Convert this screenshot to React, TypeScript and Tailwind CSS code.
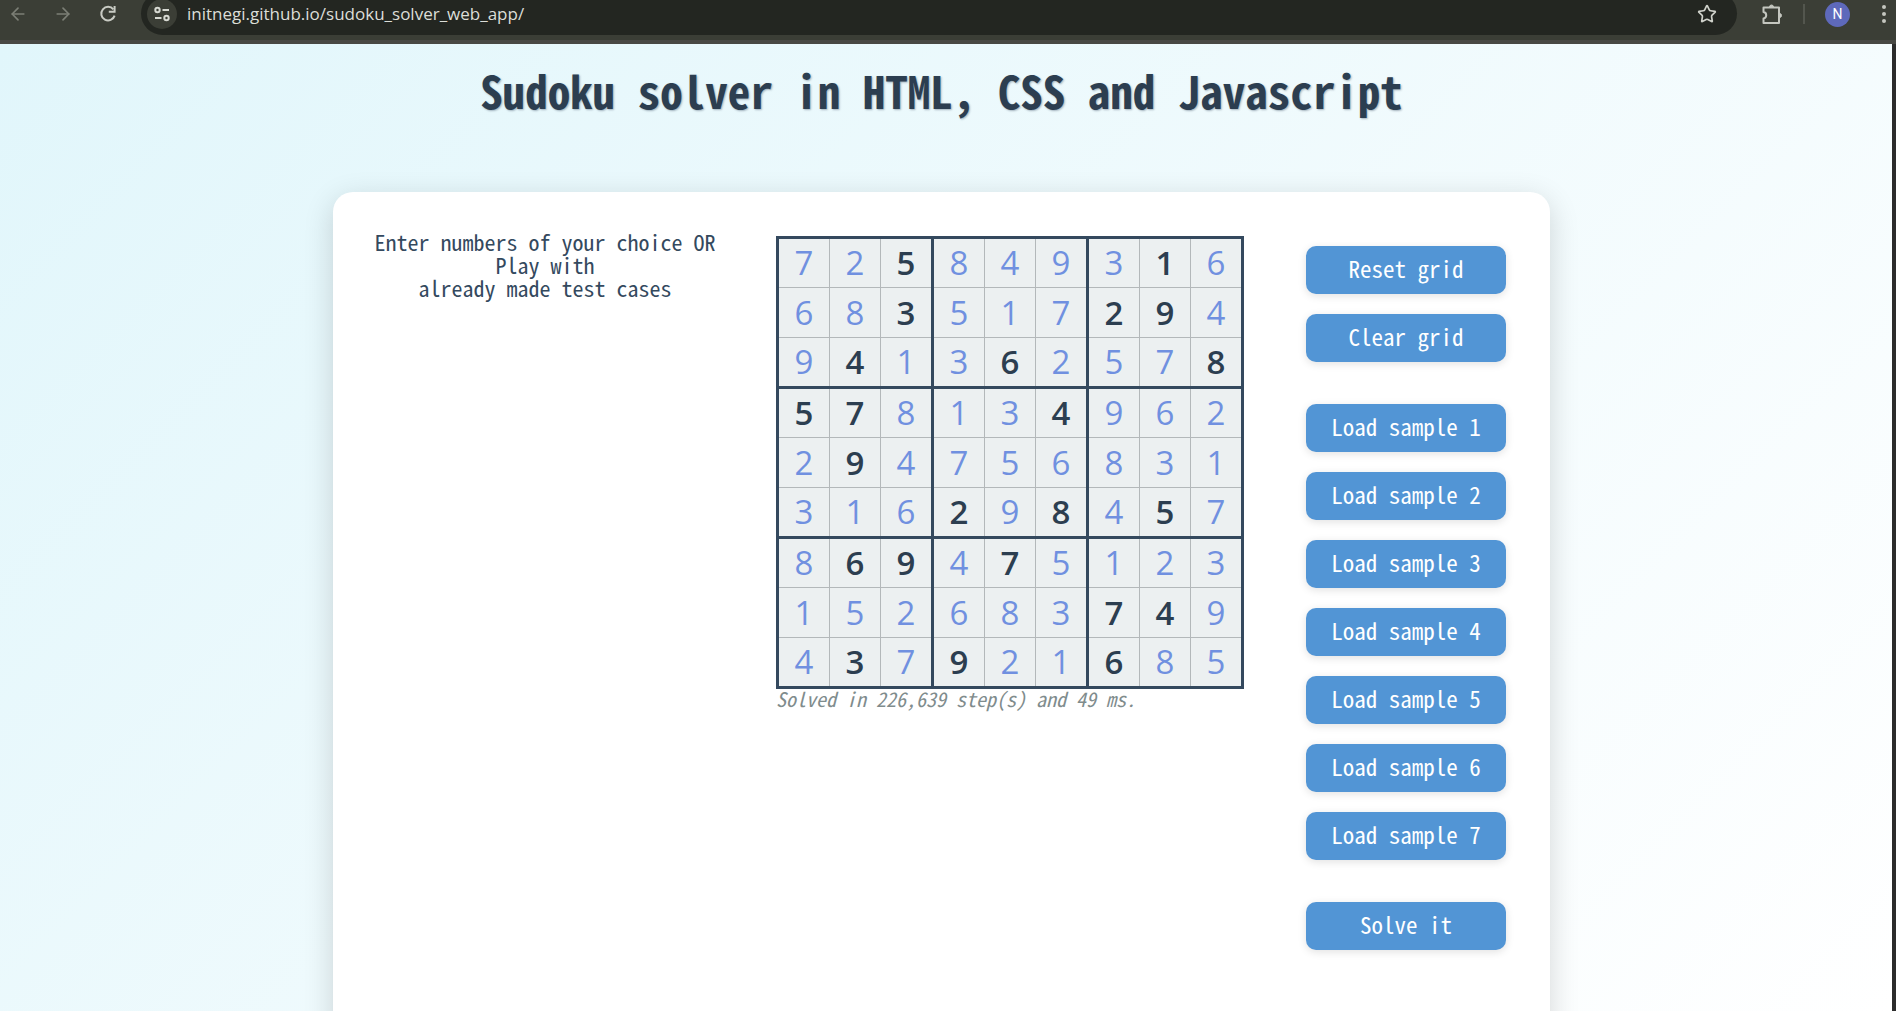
import React from "react";
import { Star, ArrowLeft, ArrowRight } from "lucide-react";

const mono = "font-['Noto_Sans_Mono_CJK_SC','Liberation_Mono',monospace]";

const solution = [
  "725849316",
  "683517294",
  "941362578",
  "578134962",
  "294756831",
  "316298457",
  "869475123",
  "152683749",
  "437921685",
];
const given = [
  "001000010",
  "001000110",
  "010010001",
  "110001000",
  "010000000",
  "000101010",
  "011010000",
  "000000110",
  "010100100",
];

function Toolbar() {
  return (
    <header className="flex h-11 items-start overflow-hidden border-b-4 border-[#484844] bg-[#3b3e36] font-['Open_Sans','Noto_Sans',sans-serif]">
      <div className="flex h-7 shrink-0 items-center">
        <button type="button" aria-label="Back" className="ml-2 grid size-5 place-items-center text-[#7c7f76]">
          <ArrowLeft size={20} strokeWidth={2} />
        </button>
        <button type="button" aria-label="Forward" className="ml-[25px] grid size-5 place-items-center text-[#7c7f76]">
          <ArrowRight size={20} strokeWidth={2} />
        </button>
        <button type="button" aria-label="Reload" className="ml-[25px] grid size-5 place-items-center text-[#c9cbc4]">
          <svg viewBox="0 0 20 20" className="size-5" fill="none" stroke="currentColor" strokeWidth="2">
            <path d="M15.4 5.4A6.8 6.8 0 1 0 16.6 11.6" />
            <path d="M16.6 2v5.800h-5.800" />
          </svg>
        </button>
      </div>
      <div className="-mt-2 ml-[23px] flex h-[43px] min-w-0 flex-1 items-center rounded-full bg-[#232621] pr-5 pl-1.5">
        <button type="button" aria-label="Site information" className="grid size-[30px] shrink-0 place-items-center rounded-full bg-[#3b3e36] text-[#d7d9d2]">
          <svg viewBox="0 0 18 18" className="size-[18px]" fill="none" stroke="currentColor" strokeWidth="2">
            <circle cx="4.500" cy="5" r="2.200" />
            <path d="M9.500 5H16M2 13h6.500" />
            <circle cx="13.500" cy="13" r="2.200" />
          </svg>
        </button>
        <input
          aria-label="Address"
          defaultValue="initnegi.github.io/sudoku_solver_web_app/"
          className="ml-2.5 min-w-0 flex-1 bg-transparent text-[17px] text-[#dcded8] outline-none"
        />
        <button type="button" aria-label="Bookmark" className="text-[#d0d2cb]">
          <Star size={20} strokeWidth={2} strokeLinejoin="miter" />
        </button>
      </div>
      <div className="flex h-7 shrink-0 items-center text-[#c4c6bf]">
        <button type="button" aria-label="Extensions" className="ml-6">
          <svg viewBox="0 0 22 22" className="size-[22px]" fill="none" stroke="currentColor" strokeWidth="2" strokeLinejoin="round">
            <path d="M2.500 4.500H18V20H2.500V15.500A3.300 3.300 0 0 0 2.500 9Z" />
            <path d="M8.500 4A2 2 0 0 1 12.500 4ZM18.500 10.500A2 2 0 0 1 18.500 14.500Z" fill="currentColor" strokeWidth="1" />
          </svg>
        </button>
        <span className="ml-5 h-5 w-0.5 bg-[#53564e]" />
        <button type="button" className="ml-5 grid size-[25px] place-items-center rounded-full bg-[#5e69bb] font-['Roboto',sans-serif] text-sm text-white">
          N
        </button>
        <button type="button" aria-label="Menu" className="mr-1.5 ml-7">
          <svg viewBox="0 0 12 22" className="h-[22px] w-3" fill="currentColor">
            <circle cx="6" cy="4" r="2" />
            <circle cx="6" cy="11" r="2" />
            <circle cx="6" cy="18" r="2" />
          </svg>
        </button>
      </div>
    </header>
  );
}

function SudokuGrid() {
  return (
    <div className="shrink-0">
      <table className="border-collapse border-[3px] border-[#34495e] bg-[#ecf0f1] font-['Open_Sans','Noto_Sans',sans-serif]">
        <tbody>
          {solution.map((row, r) => (
            <tr key={r}>
              {row.split("").map((digit, c) => (
                <td
                  key={c}
                  className={
                    "h-[50px] border-[#b3b8ba] p-0 " +
                    (c % 3 === 2 ? "border-r-[3px] border-r-[#34495e] " : "border-r ") +
                    (r % 3 === 2 ? "border-b-[3px] border-b-[#34495e]" : "border-b")
                  }
                >
                  <input
                    aria-label={`Row ${r + 1} column ${c + 1}`}
                    defaultValue={digit}
                    maxLength={1}
                    className={
                      "block h-10 w-[50px] bg-transparent text-center text-[33px] outline-none " +
                      (given[r][c] === "1" ? "font-semibold text-[#2c3e50]" : "text-[#7090e0]")
                    }
                  />
                </td>
              ))}
            </tr>
          ))}
        </tbody>
      </table>
      <p className="text-xl leading-5 text-[#7f8c8d] italic">Solved in 226,639 step(s) and 49 ms.</p>
    </div>
  );
}

function ActionButton({ children }: { children: React.ReactNode }) {
  return (
    <button
      type="button"
      className="h-12 w-[200px] rounded-[10px] bg-[#5295d5] pb-1 text-[23px] text-white shadow-[0_2px_8px_rgba(0,0,0,0.12)]"
    >
      {children}
    </button>
  );
}

export default function App() {
  return (
    <div className={`flex h-screen flex-col overflow-hidden ${mono}`}>
      <Toolbar />
      <div className="flex min-h-0 flex-1">
        <main className="min-w-0 flex-1 overflow-hidden bg-[linear-gradient(135deg,#e1f6fb,#ffffff)] pr-[9px] text-[#34495e]">
          <h1 className="pt-4 text-center text-[45px] leading-[60px] font-bold text-[#2c3e50] text-shadow-[1px_1px_2px_rgba(52,73,94,0.4)]">
            Sudoku solver in HTML, CSS and Javascript
          </h1>
          <section className="mx-auto mt-[72px] flex min-h-[900px] w-[1217px] max-w-full items-start rounded-[20px] bg-white pt-11 pr-11 pl-8 shadow-[0_8px_30px_rgba(0,0,0,0.16)]">
            <p className="-mt-1.5 w-[360px] text-center text-[22px] leading-[23px]">
              Enter numbers of your choice OR Play with
              <br />
              already made test cases
            </p>
            <div className="ml-[51px]">
              <SudokuGrid />
            </div>
            <div className="ml-auto flex flex-col gap-[42px] pt-2.5">
              <div className="flex flex-col gap-5">
                <ActionButton>Reset grid</ActionButton>
                <ActionButton>Clear grid</ActionButton>
              </div>
              <div className="flex flex-col gap-5">
                {[1, 2, 3, 4, 5, 6, 7].map((n) => (
                  <ActionButton key={n}>Load sample {n}</ActionButton>
                ))}
              </div>
              <ActionButton>Solve it</ActionButton>
            </div>
          </section>
        </main>
        <div className="w-1 shrink-0 bg-[#2c2c2c]" />
      </div>
    </div>
  );
}
